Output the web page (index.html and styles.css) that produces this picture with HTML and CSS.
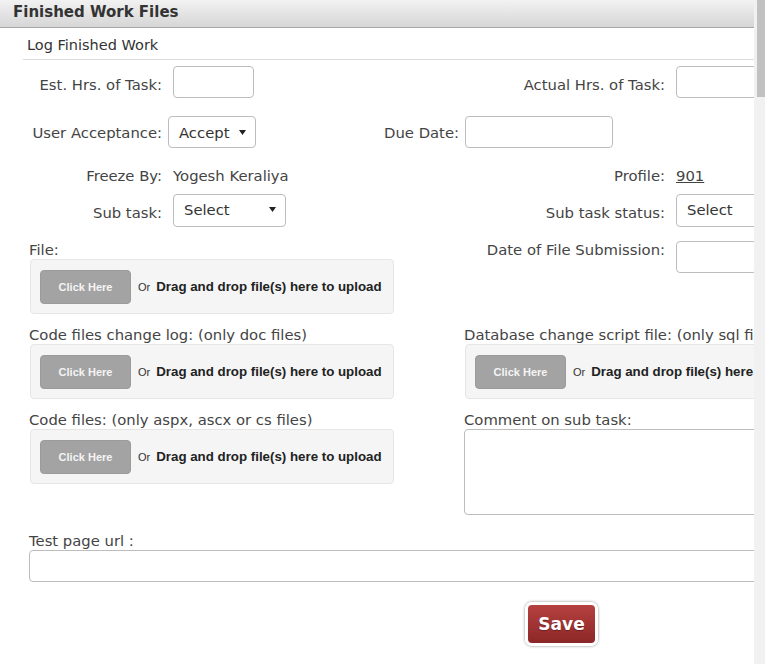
FILE: index.html
```html
<!DOCTYPE html>
<html>
<head>
<meta charset="utf-8">
<title>Finished Work Files</title>
<link rel="stylesheet" href="styles.css">
</head>
<body>
<div class="page">
  <div class="viewport">
    <div class="header"><h2 class="title">Finished Work Files</h2></div>
    <div class="content">
      <div class="subhead">Log Finished Work</div>

      <div class="row row-a r1">
        <label class="lbl">Est. Hrs. of Task:</label>
        <div class="ctl"><input class="txt hrs" type="text"></div>
        <label class="lbl">Actual Hrs. of Task:</label>
        <div class="ctl"><input class="txt hrs" type="text"></div>
      </div>

      <div class="row row-b r2">
        <label class="lbl">User Acceptance:</label>
        <div class="ctl"><div class="select sel-accept"><span>Accept</span><svg class="arrow" width="7" height="5" viewBox="0 0 7 5"><path d="M0 0H7L3.5 5Z" fill="#222"/></svg></div></div>
        <label class="lbl">Due Date:</label>
        <div class="ctl"><input class="txt due" type="text"></div>
      </div>

      <div class="row row-a r3">
        <span class="lbl">Freeze By:</span>
        <span class="val">Yogesh Keraliya</span>
        <span class="lbl">Profile:</span>
        <a class="val link" href="#">901</a>
      </div>

      <div class="row row-a r4">
        <label class="lbl">Sub task:</label>
        <div class="ctl"><div class="select sel-sub"><span>Select</span><svg class="arrow" width="7" height="5" viewBox="0 0 7 5"><path d="M0 0H7L3.5 5Z" fill="#222"/></svg></div></div>
        <label class="lbl">Sub task status:</label>
        <div class="ctl"><div class="select sel-status"><span>Select</span><svg class="arrow" width="7" height="5" viewBox="0 0 7 5"><path d="M0 0H7L3.5 5Z" fill="#222"/></svg></div></div>
      </div>

      <div class="files">
        <div class="frow f1">
          <div class="fcol">
            <div class="flbl">File:</div>
            <div class="upload"><span class="click">Click Here</span><span class="or">Or</span><span class="drag">Drag and drop file(s) here to upload</span></div>
          </div>
          <div class="fcol right-inline">
            <label class="lbl">Date of File Submission:</label>
            <input class="txt hrs" type="text">
          </div>
        </div>

        <div class="frow f2">
          <div class="fcol">
            <div class="flbl">Code files change log: (only doc files)</div>
            <div class="upload"><span class="click">Click Here</span><span class="or">Or</span><span class="drag">Drag and drop file(s) here to upload</span></div>
          </div>
          <div class="fcol">
            <div class="flbl">Database change script file: (only sql files)</div>
            <div class="upload"><span class="click">Click Here</span><span class="or">Or</span><span class="drag">Drag and drop file(s) here to upload</span></div>
          </div>
        </div>

        <div class="frow f3">
          <div class="fcol">
            <div class="flbl">Code files: (only aspx, ascx or cs files)</div>
            <div class="upload"><span class="click">Click Here</span><span class="or">Or</span><span class="drag">Drag and drop file(s) here to upload</span></div>
          </div>
          <div class="fcol">
            <div class="flbl">Comment on sub task:</div>
            <textarea class="comment"></textarea>
          </div>
        </div>

        <div class="urlrow">
          <div class="flbl">Test page url :</div>
          <input class="txt url" type="text">
        </div>

        <div class="saverow">
          <button class="save" type="button">Save</button>
        </div>
      </div>
    </div>
  </div>
  <div class="scrollbar"><div class="thumb"></div></div>
</div>
</body>
</html>
```

FILE: styles.css
```css
* { box-sizing: border-box; }
html, body { margin: 0; padding: 0; background: #fff; }
body {
  font-family: "DejaVu Sans", Verdana, sans-serif;
  font-size: 14.8px;
  color: #444;
}
.page {
  display: flex;
  width: 765px;
  height: 664px;
  overflow: hidden;
}
.viewport {
  width: 754px;
  flex: 0 0 754px;
  overflow: hidden;
  position: relative;
}
.scrollbar {
  flex: 0 0 11px;
  background: #f1f1f1;
  padding-left: 3px;
}
.thumb {
  height: 97px;
  background: #c1c1c1;
}
.header {
  height: 28px;
  background: linear-gradient(#f2f2f2, #d6d6d6);
  border-bottom: 1px solid #a6a6a6;
  padding-left: 13px;
}
.title {
  margin: 0;
  font-size: 15px;
  font-weight: bold;
  color: #333;
  line-height: 24px;
}
.content {
  width: 1100px;
  padding-left: 23px;
}
.subhead {
  padding: 6px 0 3px 4px;
  line-height: 22px;
  width: 731px;
  border-bottom: 1px solid #dcdcdc;
  color: #333;
  font-size: 14.5px;
}
.row {
  display: grid;
  align-items: center;
}
.row-a {
  grid-template-columns: 139px 180px 301px 140px;
  column-gap: 11px;
}
.row-b {
  grid-template-columns: 139px 140px 145px 160px;
  column-gap: 6px;
}
.lbl { text-align: right; white-space: nowrap; }
.val { white-space: nowrap; }
.link { color: #444; text-decoration: underline; }
.r1 { margin-top: 6px; height: 32px; }
.r1 .lbl { padding-top: 4px; }
.r2 { margin-top: 18px; height: 32px; }
.r3 { margin-top: 17px; height: 20px; }
.r4 { margin-top: 9px; height: 33px; }
.r4 .lbl { padding-top: 3px; }
.ctl { display: flex; align-items: center; }
.txt {
  height: 32px;
  border: 1px solid #bdbdbd;
  border-radius: 4px;
  background: #fff;
  font: inherit;
  padding: 0 6px;
  margin: 0;
  outline: none;
}
.hrs { width: 81px; }
.due { width: 148px; }
.select {
  display: flex;
  align-items: center;
  justify-content: space-between;
  height: 32px;
  border: 1px solid #bdbdbd;
  border-radius: 4px;
  background: #fff;
  color: #333;
  padding: 0 9px 0 10px;
}
.sel-accept { width: 88px; }
.sel-sub { width: 113px; height: 33px; padding-bottom: 3px; }
.sel-status { width: 113px; height: 33px; padding-bottom: 3px; }
.arrow { display: block; margin-top: 1px; }
.files { padding-left: 6px; }
.frow {
  display: grid;
  grid-template-columns: 435px 500px;
  align-items: start;
}
.f1 { margin-top: 14px; }
.f2, .f3 { margin-top: 12px; }
.flbl {
  line-height: 18px;
  white-space: nowrap;
}
.right-inline {
  display: grid;
  grid-template-columns: 201px 81px;
  column-gap: 11px;
  align-items: start;
}
.right-inline .lbl { line-height: 18px; }
.upload {
  width: 364px;
  height: 55px;
  margin-left: 1px;
  background: #f5f5f5;
  border: 1px solid #e6e6e6;
  border-radius: 4px;
  display: flex;
  align-items: center;
  padding-left: 9px;
  font-family: "Liberation Sans", Arial, sans-serif;
}
.click {
  width: 91px;
  height: 34px;
  background: #a3a3a3;
  border: 1px solid #9b9b9b;
  border-radius: 4px;
  color: #f4f4f4;
  font-size: 11px;
  font-weight: bold;
  display: flex;
  align-items: center;
  justify-content: center;
}
.or {
  font-size: 11px;
  color: #333;
  margin-left: 7px;
}
.drag {
  font-size: 13.3px;
  font-weight: bold;
  color: #222;
  margin-left: 6px;
  white-space: nowrap;
}
.comment {
  display: block;
  width: 420px;
  height: 86px;
  border: 1px solid #bdbdbd;
  border-radius: 4px;
  resize: none;
  margin: 0;
  font: inherit;
}
.urlrow { margin-top: 17px; }
.url { width: 1060px; display: block; }
.saverow {
  margin-top: 20px;
  padding-left: 496px;
}
.save {
  width: 73px;
  height: 44px;
  border: 3px solid #fff;
  border-radius: 7px;
  background: linear-gradient(#b5413f, #8c2727);
  box-shadow: 0 0 3px rgba(0,0,0,0.45);
  color: #fff;
  font-family: "DejaVu Sans", Verdana, sans-serif;
  font-weight: bold;
  font-size: 17px;
  padding: 0;
  text-shadow: 0 1px 1px rgba(0,0,0,0.3);
}
```
